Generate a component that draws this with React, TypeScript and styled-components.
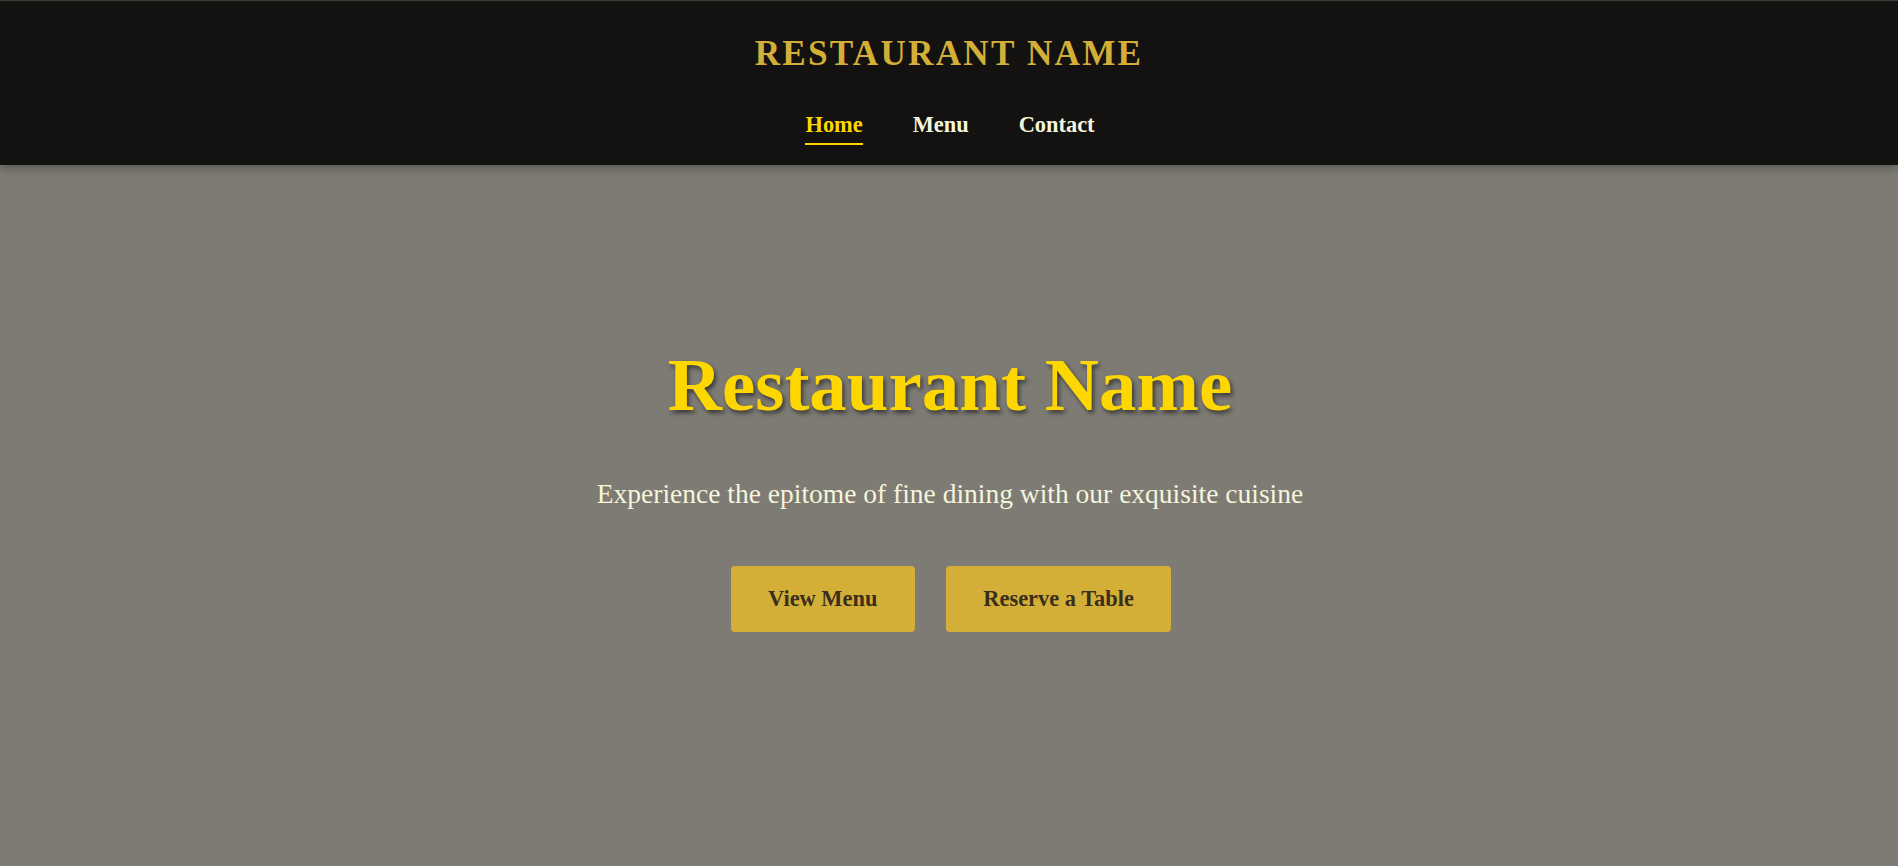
import React from "react";
import styled, { createGlobalStyle } from "styled-components";

const GlobalStyle = createGlobalStyle`
  html, body {
    margin: 0;
    padding: 0;
  }
  body {
    background: #7d7b74;
    font-family: "Liberation Serif", "Times New Roman", serif;
  }
  * { box-sizing: border-box; }
`;

const Page = styled.div`
  min-height: 100vh;
  display: flex;
  flex-direction: column;
`;

const Header = styled.header`
  position: relative;
  z-index: 2;
  background: #131210;
  border-top: 1px solid #3b3c38;
  padding: 33px 0 20px;
  display: flex;
  flex-direction: column;
  align-items: center;
  box-shadow: 0 2px 10px rgba(0, 0, 0, 0.35);
`;

const Brand = styled.div`
  font-family: "Liberation Serif", "Times New Roman", serif;
  font-weight: 700;
  font-size: 35.2px;
  line-height: normal;
  letter-spacing: 2.2px;
  color: #d4af37;
  text-transform: uppercase;
`;

const Nav = styled.nav`
  margin-top: 38px;
  display: flex;
  gap: 50px;
  padding-left: 2px;
`;

const NavLink = styled.a<{ $active?: boolean }>`
  font-family: "Liberation Serif", "Times New Roman", serif;
  font-weight: 700;
  font-size: 22.4px;
  line-height: normal;
  text-decoration: none;
  cursor: pointer;
  padding-bottom: 5px;
  color: ${(p) => (p.$active ? "#ffd700" : "#f5f5dc")};
  border-bottom: 2px solid ${(p) => (p.$active ? "#ffd700" : "transparent")};
`;

const Hero = styled.main`
  flex: 1;
  background: #7d7b74;
  padding: 177px 20px 60px;
  display: flex;
  flex-direction: column;
  align-items: center;
  text-align: center;
`;

const Title = styled.h1`
  margin: 0;
  padding-left: 2px;
  font-family: "Liberation Serif", "Times New Roman", serif;
  font-weight: 700;
  font-size: 75px;
  line-height: normal;
  color: #ffd700;
  text-shadow: 2px 3px 4px rgba(0, 0, 0, 0.55);
`;

const Subtitle = styled.p`
  margin: 50px 0 0;
  padding-left: 2px;
  font-family: "Liberation Serif", "Times New Roman", serif;
  font-weight: 400;
  font-size: 27.5px;
  line-height: normal;
  color: #f5f5dc;
`;

const Actions = styled.div`
  margin-top: 56px;
  padding-left: 4px;
  display: flex;
  gap: 31px;
`;

const Button = styled.button`
  font-family: "Liberation Serif", "Times New Roman", serif;
  font-weight: 700;
  font-size: 22.4px;
  line-height: normal;
  color: #3a2e1c;
  background: #d4af37;
  border: none;
  border-radius: 4px;
  padding: 20px 37.5px;
  cursor: pointer;
`;

export default function App() {
  return (
    <>
      <GlobalStyle />
      <Page>
        <Header>
          <Brand>Restaurant Name</Brand>
          <Nav>
            <NavLink $active>Home</NavLink>
            <NavLink>Menu</NavLink>
            <NavLink>Contact</NavLink>
          </Nav>
        </Header>
        <Hero>
          <Title>Restaurant Name</Title>
          <Subtitle>Experience the epitome of fine dining with our exquisite cuisine</Subtitle>
          <Actions>
            <Button>View Menu</Button>
            <Button>Reserve a Table</Button>
          </Actions>
        </Hero>
      </Page>
    </>
  );
}
